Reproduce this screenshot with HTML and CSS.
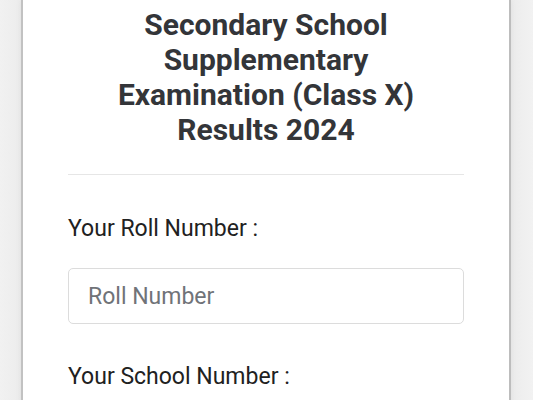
FILE: index.html
```html
<!DOCTYPE html>
<html lang="en">
<head>
<meta charset="utf-8">
<title>Secondary School Supplementary Examination (Class X) Results 2024</title>
<link rel="stylesheet" href="styles.css">
</head>
<body>
<div class="page">
  <main class="card">
    <h1 class="title">Secondary School Supplementary Examination (Class X) Results 2024</h1>
    <hr class="divider">
    <form class="form">
      <div class="field">
        <label class="label" for="roll">Your Roll Number :</label>
        <input class="input" id="roll" type="text" placeholder="Roll Number">
      </div>
      <div class="field">
        <label class="label" for="school">Your School Number :</label>
        <input class="input" id="school" type="text" placeholder="School Number">
      </div>
    </form>
  </main>
</div>
</body>
</html>
```
FILE: styles.css
```css
html, body {
  margin: 0;
  padding: 0;
  height: 100%;
  overflow: hidden;
}
body {
  background: linear-gradient(to right, #f1f1f1 0, #ececec 21px, #ececec 512px, #f2f2f2 533px);
  font-family: Roboto, "Noto Sans", "Liberation Sans", sans-serif;
}
.page {
  display: flex;
  justify-content: flex-start;
  padding-left: 21px;
  min-height: 100%;
}
.card {
  min-height: 600px;
  background: #fff;
  border-left: 2px solid #c2c2c2;
  border-right: 2px solid #bdbdbd;
  box-shadow: 0 0 6px rgba(0,0,0,0.06);
  padding: 7px 45px 0 45px;
  box-sizing: content-box;
  width: 396px;
}
.title {
  margin: 0;
  font-size: 30px;
  line-height: 35px;
  font-weight: 700;
  color: #333539;
  text-align: center;
  padding: 0 45px;
}
.divider {
  margin: 27px 0 0 0;
  border: 0;
  height: 1px;
  background: #e6e6e6;
}
.form {
  display: flex;
  flex-direction: column;
  gap: 39px;
  padding-top: 40px;
}
.field {
  display: flex;
  flex-direction: column;
  gap: 26px;
}
.label {
  font-size: 23px;
  line-height: 27px;
  color: #212121;
}
.input {
  height: 56px;
  box-sizing: border-box;
  border: 1px solid #dcdcdc;
  border-radius: 5px;
  padding: 0 19px;
  font-family: Roboto, "Noto Sans", "Liberation Sans", sans-serif;
  font-size: 23px;
  color: #333;
  background: #fff;
  outline: none;
}
.input::placeholder {
  color: #707378;
}
```
